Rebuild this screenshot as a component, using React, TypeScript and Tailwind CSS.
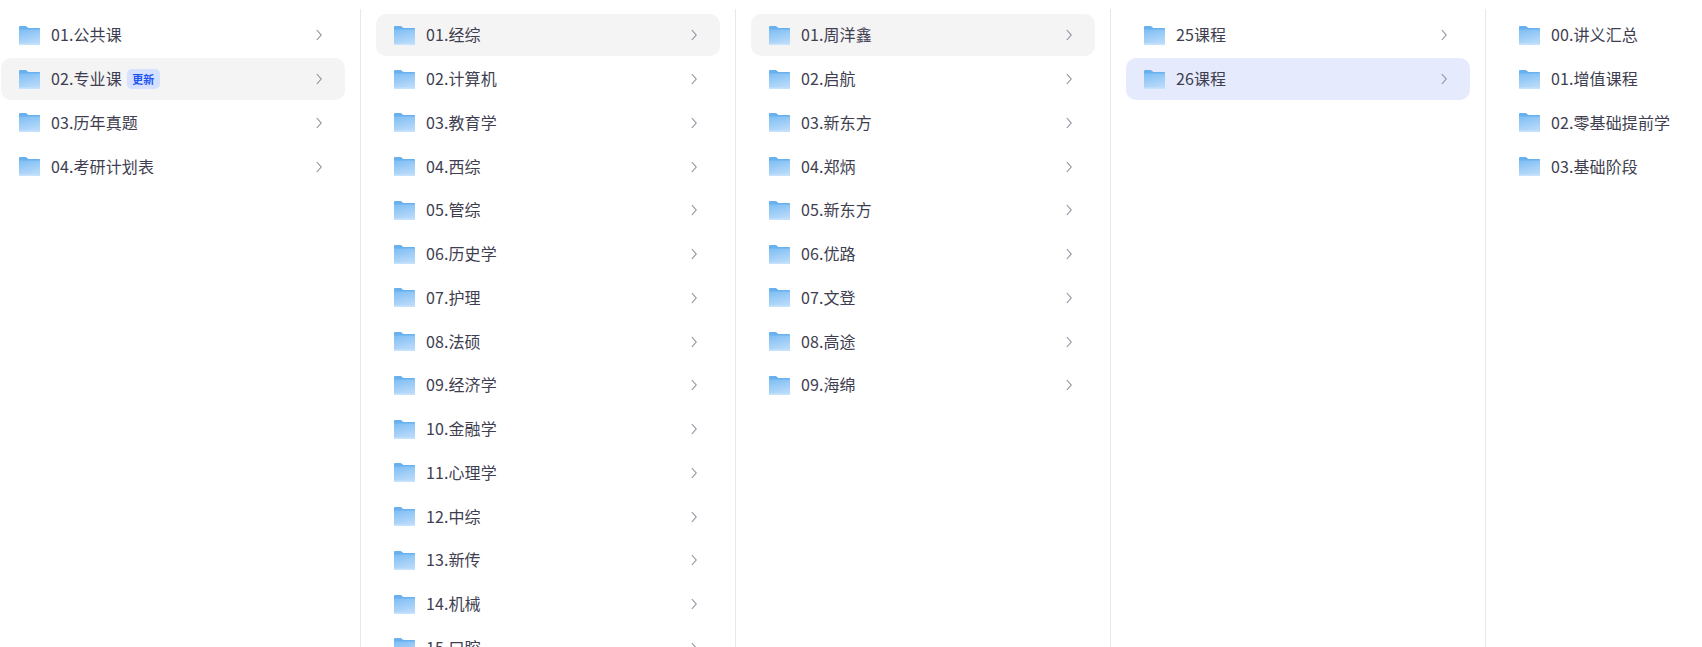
import React from "react";

function Folder() {
  return (
    <svg width="21" height="19" viewBox="0 0 21 19" className="shrink-0">
      <defs>
        <linearGradient id="fg" x1="0" y1="0" x2="0.3" y2="1">
          <stop offset="0" stopColor="#7dbdf4" />
          <stop offset="1" stopColor="#b8daf9" />
        </linearGradient>
      </defs>
      <path d="M0 1.2C0 .5.5 0 1.2 0h5.3c.4 0 .7.2 1 .4L9.4 2H20c.6 0 1 .4 1 1v2H0z" fill="#68b1ee" />
      <path d="M0 3.4h21V18c0 .6-.4 1-1 1H1c-.6 0-1-.4-1-1z" fill="url(#fg)" />
      <rect x="0" y="17.6" width="21" height="1.4" rx=".6" fill="#c6e2fd" />
      <rect x="17.4" y="7.2" width="1.6" height="1" fill="#a5cff7" />
    </svg>
  );
}

function Chevron() {
  return (
    <svg width="8" height="14" viewBox="0 0 8 14" fill="none" className="shrink-0">
      <path d="M1.8 2 6.2 7l-4.4 5" stroke="#8f8f9c" strokeWidth="1.1" />
    </svg>
  );
}

type Item = { t: string; badge?: boolean; hl?: "gray" | "blue" };

function Row({ item }: { item: Item }) {
  const bg = item.hl === "gray" ? "bg-[#f4f4f4]" : item.hl === "blue" ? "bg-[#e5ebfc]" : "";
  return (
    <div className={`flex items-center h-[42px] shrink-0 rounded-[10px] pl-[18px] pr-[22px] ${bg}`}>
      <Folder />
      <span className="ml-[11px] pb-[2px] text-[16px] leading-[22px] tracking-[0.1px] text-[#3e3e50] whitespace-nowrap">{item.t}</span>
      {item.badge && (
        <span className="ml-[5px] h-5 w-[33px] text-center rounded-[5px] bg-[#d6e1ff] text-[#1f55f0] text-[11px] font-bold leading-5">更新</span>
      )}
      <span className="flex-1" />
      <Chevron />
    </div>
  );
}

const c1: Item[] = [{ t: "01.公共课" }, { t: "02.专业课", badge: true, hl: "gray" }, { t: "03.历年真题" }, { t: "04.考研计划表" }];
const c2: Item[] = ["01.经综", "02.计算机", "03.教育学", "04.西综", "05.管综", "06.历史学", "07.护理", "08.法硕", "09.经济学", "10.金融学", "11.心理学", "12.中综", "13.新传", "14.机械", "15.口腔"].map((t, i) => ({ t, hl: i === 0 ? "gray" : undefined }));
const c3: Item[] = ["01.周洋鑫", "02.启航", "03.新东方", "04.郑炳", "05.新东方", "06.优路", "07.文登", "08.高途", "09.海绵"].map((t, i) => ({ t, hl: i === 0 ? "gray" : undefined }));
const c4: Item[] = [{ t: "25课程" }, { t: "26课程", hl: "blue" }];
const c5: Item[] = [{ t: "00.讲义汇总" }, { t: "01.增值课程" }, { t: "02.零基础提前学" }, { t: "03.基础阶段" }];

function Column({ items, first }: { items: Item[]; first?: boolean }) {
  return (
    <div className={`shrink-0 flex flex-col gap-[1.75px] pt-[14.3px] overflow-hidden relative ${first ? "w-[360px] pl-px pr-[15px]" : "w-[375px] pl-[16px] pr-[15px]"}`}>
      {!first && <div className="absolute left-0 top-[9px] bottom-0 w-px bg-[#e8e8e8]" />}
      {items.map((it) => (
        <Row key={it.t} item={it} />
      ))}
    </div>
  );
}

export default function App() {
  return (
    <div
      className="w-[1702px] h-[647px] bg-white flex overflow-hidden"
      style={{ fontFamily: '"Noto Sans CJK SC", "Noto Sans", sans-serif' }}
    >
      <Column items={c1} first />
      <Column items={c2} />
      <Column items={c3} />
      <Column items={c4} />
      <Column items={c5} />
    </div>
  );
}
